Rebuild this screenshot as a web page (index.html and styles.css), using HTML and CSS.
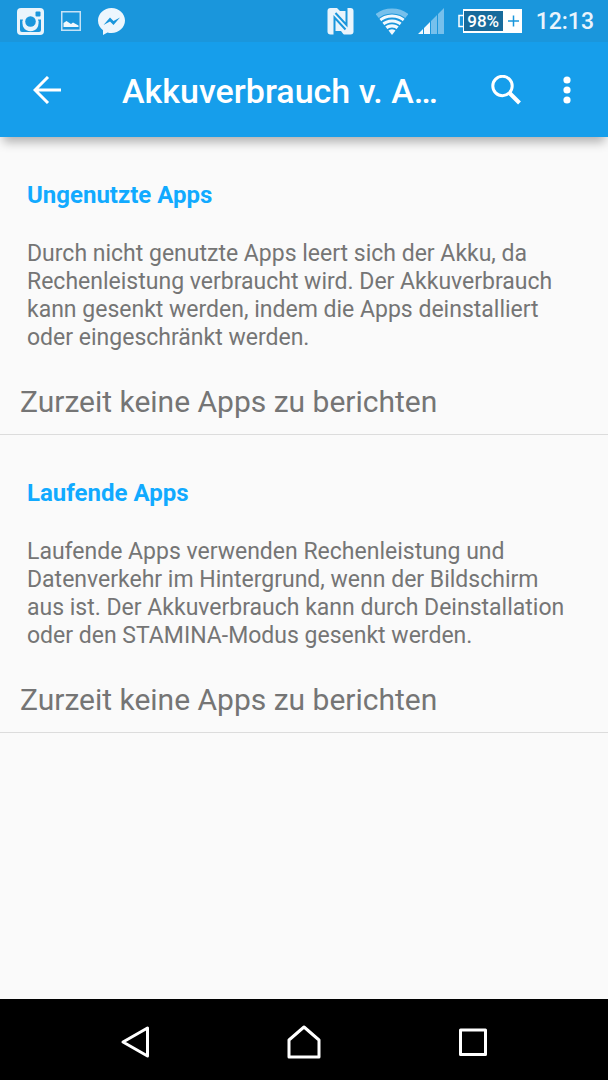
FILE: index.html
```html
<!DOCTYPE html>
<html lang="de">
<head>
<meta charset="utf-8">
<meta name="viewport" content="width=device-width, initial-scale=1">
<title>Akkuverbrauch v. Apps</title>
<link rel="stylesheet" href="styles.css">
</head>
<body>
<div class="screen">
  <div class="status-bar">
    <div class="notifications">
      <svg width="27" height="27" viewBox="0 0 27 27" aria-hidden="true">
        <rect width="27" height="27" rx="4" fill="#e9f4fc"/>
        <path d="M3 11.500h3.500a8 8 0 1 0 14 0H24V22a2 2 0 0 1-2 2H5a2 2 0 0 1-2-2z" fill="#1a96dc"/>
        <circle cx="13.500" cy="13.500" r="8" fill="#e9f4fc"/>
        <circle cx="13.500" cy="13.500" r="5.300" fill="#1a96dc"/>
        <rect x="18.500" y="3.500" width="5" height="5" rx="1" fill="#1a96dc"/>
      </svg>
      <svg width="20" height="20" viewBox="0 0 20 20" aria-hidden="true">
        <rect x=".75" y=".75" width="18.500" height="18.500" fill="none" stroke="#c5e2f6" stroke-width="1.500"/>
        <path d="M2.500 16v-4l3-2 4.500 3 2-1.500 5.500 3V16z" fill="#f0f8fd"/>
      </svg>
      <svg width="27" height="27" viewBox="0 0 27 27" aria-hidden="true">
        <path d="M13.500 0C6 0 0 5.600 0 12.600c0 4 1.900 7.400 5 9.700V27l4.500-2.500c1.300.4 2.600.6 4 .6 7.500 0 13.500-5.600 13.500-12.500S21 0 13.500 0z" fill="#edf6fd"/>
        <path d="M5.500 17l6.500-7.500 3.500 3.500 6.500-3.500-6.500 7.500-3.500-3.500z" fill="#1a96dc"/>
      </svg>
    </div>
    <div class="system">
      <svg width="27" height="27" viewBox="0 0 27 27" aria-hidden="true">
        <rect x=".5" width="26" height="26.500" rx="3" fill="#e9f4fc"/>
        <path d="M7.500 27V9.500L18.500 21.500M19.500 0v17L8.500 5" fill="none" stroke="#1a96dc" stroke-width="2"/>
        <path d="M10 0h9v3h-6zM8 27h9l-3-4H8z" fill="#1a96dc"/>
      </svg>
      <svg class="wifi" width="32" height="27" viewBox="0 0 32 27" aria-hidden="true">
        <clipPath id="wedge"><path d="M16 27L-2 4V-1h36v5z"/></clipPath>
        <g fill="none" clip-path="url(#wedge)">
          <circle cx="16" cy="27" r="24" stroke="#76c0ec" stroke-width="5"/>
          <g stroke="#f2f9fe" stroke-width="3.200">
            <circle cx="16" cy="27" r="19"/>
            <circle cx="16" cy="27" r="14"/>
            <circle cx="16" cy="27" r="9.200"/>
          </g>
          <circle cx="16" cy="27" r="5.800" fill="#f2f9fe"/>
        </g>
      </svg>
      <svg class="signal" width="26" height="26" viewBox="0 0 26 26" aria-hidden="true">
        <path d="M0 26l5-5v5zM6 20l6-6v12H6z" fill="#f2f9fe"/>
        <path d="M13 13l6-6v19h-6zM20 6l6-6v26h-6z" fill="#76c0ec"/>
      </svg>
      <div class="battery">
        <svg width="5" height="24" viewBox="0 0 5 24" aria-hidden="true"><path d="M5 6.500H1v11h4" fill="none" stroke="#fff" stroke-width="1.500"/></svg>
        <span class="battery-level">98%</span>
        <svg width="17" height="24" viewBox="0 0 17 24" aria-hidden="true"><path d="M0 0h17v24H0z" fill="#fff"/><path d="M3 12h11M8.500 6.500v11" stroke="#1a96dc" stroke-width="1.500"/></svg>
      </div>
      <time class="clock">12:13</time>
    </div>
  </div>

  <header class="app-bar">
    <button class="icon-button" type="button" aria-label="Zurück">
      <svg width="28" height="28" viewBox="0 0 28 28"><path d="M15 1L2 14l13 13M2 14h26" fill="none" stroke="#fff" stroke-width="3"/></svg>
    </button>
    <h1 class="title">Akkuverbrauch v. A…</h1>
    <button class="icon-button" type="button" aria-label="Suchen">
      <svg width="30" height="30" viewBox="0 0 30 30"><g fill="none" stroke="#fff"><circle cx="11.500" cy="11" r="9.700" stroke-width="3"/><path d="M18.500 18l10 10" stroke-width="4"/></g></svg>
    </button>
    <button class="icon-button" type="button" aria-label="Weitere Optionen">
      <svg width="8" height="28" viewBox="0 0 8 28"><g fill="#fff"><circle cx="4" cy="4" r="3.600"/><circle cx="4" cy="14" r="3.600"/><circle cx="4" cy="24" r="3.600"/></g></svg>
    </button>
  </header>

  <main class="content">
    <section class="group">
      <h2 class="group-title">Ungenutzte Apps</h2>
      <p class="description">Durch nicht genutzte Apps leert sich der Akku, da Rechenleistung verbraucht wird. Der Akkuverbrauch kann gesenkt werden, indem die Apps deinstalliert oder eingeschränkt werden.</p>
      <p class="empty">Zurzeit keine Apps zu berichten</p>
    </section>
    <section class="group">
      <h2 class="group-title">Laufende Apps</h2>
      <p class="description">Laufende Apps verwenden Rechenleistung und Datenverkehr im Hintergrund, wenn der Bildschirm aus ist. Der Akkuverbrauch kann durch Deinstallation oder den STAMINA-Modus gesenkt werden.</p>
      <p class="empty">Zurzeit keine Apps zu berichten</p>
    </section>
  </main>

  <nav class="nav-bar" aria-label="System">
    <button class="nav-button" type="button" aria-label="Zurück">
      <svg width="32" height="34" viewBox="0 0 32 34"><path d="M28.500 3v28L4 17z"/></svg>
    </button>
    <button class="nav-button" type="button" aria-label="Startbildschirm">
      <svg width="34" height="34" viewBox="0 0 34 34"><path d="M2 32V15L17 2l15 13v17z"/></svg>
    </button>
    <button class="nav-button" type="button" aria-label="Letzte Apps">
      <svg width="28" height="28" viewBox="0 0 28 28"><path d="M1.500 2h25v24.500h-25z"/></svg>
    </button>
  </nav>
</div>
</body>
</html>
```
FILE: styles.css
```css
* {
  box-sizing: border-box;
}

body {
  margin: 0;
  background: #fafafa;
  font-family: Roboto, "Liberation Sans", sans-serif;
}

h1, h2, p {
  margin: 0;
}

svg {
  display: block;
  flex: none;
}

button {
  margin: 0;
  padding: 0;
  border: 0;
  background: none;
}

.screen {
  display: flex;
  flex-direction: column;
  min-height: 100vh;
}

.status-bar {
  display: flex;
  align-items: center;
  justify-content: space-between;
  height: 42px;
  padding: 0 14px 0 17px;
  background: #1a96dc;
}

.notifications,
.system {
  display: flex;
  align-items: center;
  gap: 17px;
}

.system {
  gap: 14px;
}

.wifi {
  margin-left: 8px;
}

.signal {
  margin-left: -4px;
}

.battery {
  display: flex;
  align-items: center;
}

.battery-level {
  height: 24px;
  width: 42px;
  border: 2px solid #fff;
  border-left-width: 1px;
  background: #186b9c;
  color: #fff;
  font-size: 17px;
  font-weight: 500;
  line-height: 20px;
  text-align: center;
}

.clock {
  padding-top: 2px;
  color: #e9f4fc;
  font-size: 23px;
  font-weight: 500;
  line-height: 28px;
}

.app-bar {
  display: flex;
  align-items: center;
  height: 95px;
  padding: 0 11px 0 16px;
  background: #169eeb;
  box-shadow: 0 8px 10px -3px rgba(0, 0, 0, 0.3);
}

.icon-button {
  display: flex;
  align-items: center;
  justify-content: center;
  width: 61px;
  height: 61px;
}

.title {
  flex: 1;
  padding: 2px 0 0 45px;
  overflow: hidden;
  color: #fff;
  font-size: 34px;
  font-weight: 500;
  line-height: 40px;
  text-overflow: ellipsis;
  white-space: nowrap;
}

.content {
  flex: 1;
}

.group {
  border-bottom: 1px solid #dcdcdc;
  padding-top: 44px;
}

.group-title {
  padding: 0 27px;
  color: #11aaff;
  font-size: 24px;
  font-weight: 700;
  line-height: 28px;
}

.description {
  padding: 31px 27px 0;
  color: #757575;
  font-size: 23px;
  line-height: 28px;
}

.empty {
  padding: 32px 20px 14px;
  color: #757575;
  font-size: 30px;
  line-height: 36px;
}

.nav-bar {
  display: flex;
  align-items: center;
  justify-content: center;
  gap: 49px;
  height: 81px;
  padding-top: 5px;
  background: #000;
}

.nav-button {
  display: flex;
  align-items: center;
  justify-content: center;
  width: 120px;
  height: 76px;
  fill: none;
  stroke: #fff;
  stroke-width: 3px;
  stroke-linejoin: round;
}
```
